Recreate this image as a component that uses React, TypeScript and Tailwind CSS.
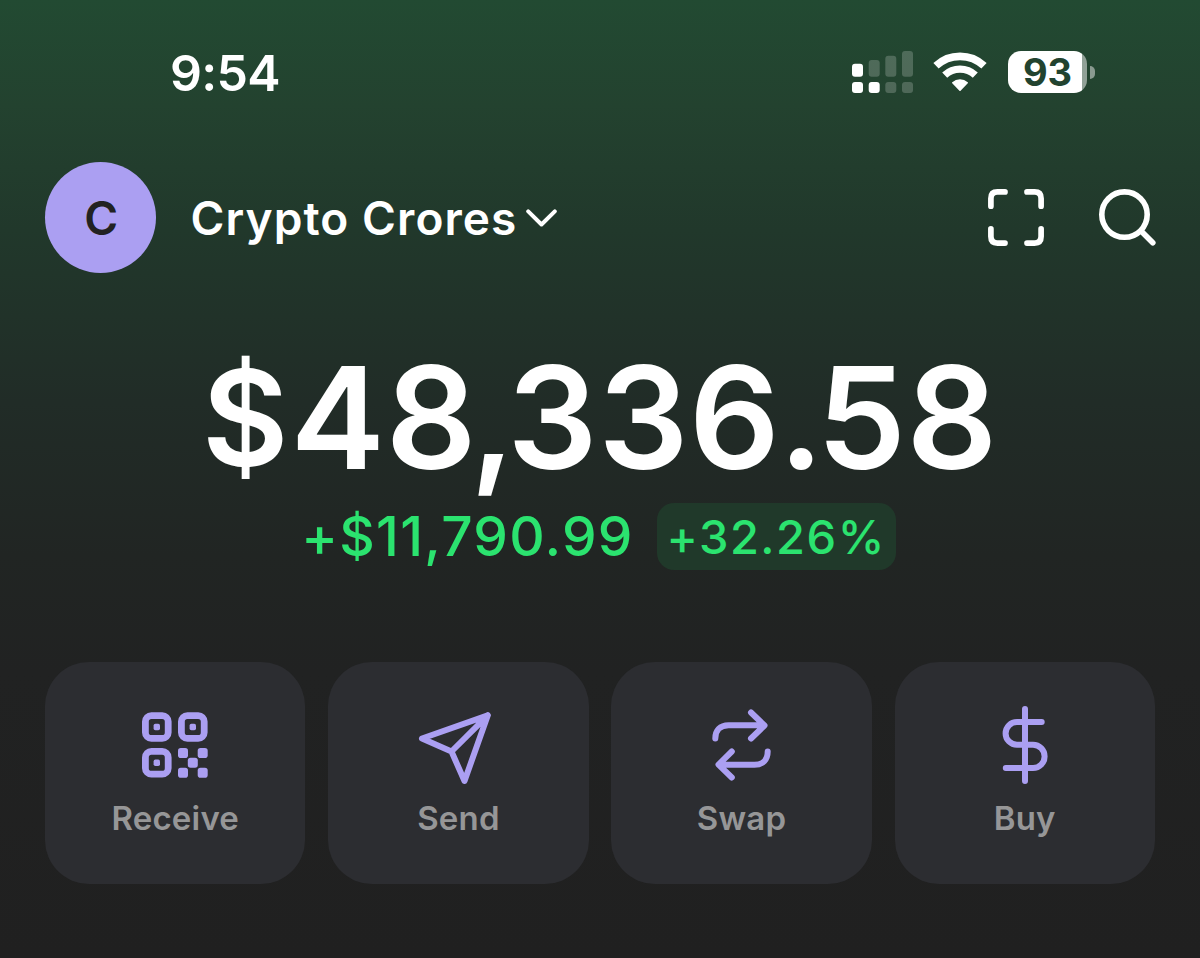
import type { ReactNode } from "react"

function SignalIcon() {
  return (
    <svg width="61" height="42" viewBox="0 0 61 42" fill="white" aria-hidden="true">
      <rect x="0" y="12.7" width="11" height="13" rx="3" />
      <rect x="16.7" y="9" width="11" height="16.7" rx="3" opacity=".2" />
      <rect x="33.3" y="4.7" width="11" height="21" rx="3" opacity=".2" />
      <rect x="50" y="0" width="11" height="25.7" rx="3" opacity=".2" />
      <rect x="0" y="31" width="11" height="11" rx="3" />
      <rect x="16.7" y="31" width="11" height="11" rx="3" />
      <rect x="33.3" y="31" width="11" height="11" rx="3" opacity=".2" />
      <rect x="50" y="31" width="11" height="11" rx="3" opacity=".2" />
    </svg>
  )
}

function WifiIcon() {
  return (
    <svg width="54" height="42" viewBox="0 0 54 42" fill="none" stroke="white" aria-hidden="true">
      <path d="M3 14.8A35.2 35.2 0 0 1 51 14.8" strokeWidth="7.7" />
      <path d="M11.7 24.1A22.4 22.4 0 0 1 42.3 24.1" strokeWidth="7.3" />
      <path d="M19.8 31.8A11 11 0 0 1 34.2 31.8L27 39.2Z" fill="white" strokeWidth="1.6" strokeLinejoin="round" />
    </svg>
  )
}

function Battery({ level }: { level: number }) {
  return (
    <div className="flex items-center">
      <div className="flex h-[42px] w-[79px] items-center justify-center rounded-[13px] bg-[linear-gradient(90deg,#fff_0_74px,#91a197_74px)]">
        <span className="text-[38px] leading-none font-bold text-[#22432f]">{level}</span>
      </div>
      <div className="ml-[3px] h-[13px] w-[5px] rounded-r-full bg-[#8a9a90]" />
    </div>
  )
}

function ScanIcon() {
  return (
    <svg width="56" height="57" viewBox="0 0 56 57" fill="none" stroke="white" strokeWidth="5.7" strokeLinecap="round" aria-hidden="true">
      <path d="M2.9 17.2V9.4Q2.9 2.9 9.4 2.9H17M39 2.9H46.6Q53.1 2.9 53.1 9.4V17.2M53.1 39.8V47.6Q53.1 54.1 46.6 54.1H39M17 54.1H9.4Q2.9 54.1 2.9 47.6V39.8" />
    </svg>
  )
}

function SearchIcon() {
  return (
    <svg width="57" height="57" viewBox="0 0 57 57" fill="none" stroke="white" strokeWidth="5.6" strokeLinecap="round" aria-hidden="true">
      <circle cx="25.5" cy="25.6" r="22.7" />
      <path d="M42.3 42.2L53.8 53.8" />
    </svg>
  )
}

const strokeProps = {
  fill: "none",
  stroke: "#ab9ff2",
  strokeWidth: 6,
  strokeLinecap: "round",
  strokeLinejoin: "round",
} as const

function Finder({ x, y }: { x: number; y: number }) {
  return (
    <g>
      <rect x={x + 3.4} y={y + 3.4} width="22.8" height="22.8" rx="6" {...strokeProps} strokeWidth={6.8} />
      <rect x={x + 11.6} y={y + 11.6} width="6.4" height="6.4" rx="1.8" fill="#ab9ff2" />
    </g>
  )
}

const qrDots = [
  [58, 53],
  [77.7, 53],
  [67.8, 62.8],
  [58, 72.7],
  [77.7, 72.7],
]

const actions: { label: string; viewBox: string; icon: ReactNode }[] = [
  {
    label: "Receive",
    viewBox: "7 5 96 92",
    icon: (
      <>
        <Finder x={22} y={17.2} />
        <Finder x={58} y={17.2} />
        <Finder x={22} y={53} />
        {qrDots.map(([x, y]) => (
          <rect key={`${x}-${y}`} x={x} y={y} width="10" height="10" rx="2.8" fill="#ab9ff2" />
        ))}
      </>
    ),
  },
  {
    label: "Send",
    viewBox: "10.5 5 96 92",
    icon: <path d="M22.5 43.5L88.3 20.3L65 86L52 56.5ZM52 56.5L88.3 20.3" {...strokeProps} />,
  },
  {
    label: "Swap",
    viewBox: "4 5 96 92",
    icon: (
      <path
        d="M25.3 43.5C25.3 35.5 30 30.3 38.5 30.3H74M61 17.5L74.5 30.5L61 43.5M77.7 56.5C77.7 64.5 73 69.7 64.5 69.7H29M41.8 56.5L28.5 69.6L41.8 82.5"
        {...strokeProps}
      />
    ),
  },
  {
    label: "Buy",
    viewBox: "-3 5 96 92",
    icon: <path d="M45 14V86M61.7 27H37A11.4 11.4 0 0 0 37 49.8H53A11.6 11.6 0 0 1 53 73H25.8" {...strokeProps} />,
  },
]

export default function App() {
  return (
    <div className="h-[958px] w-[1200px] overflow-hidden bg-[linear-gradient(180deg,#224a32_0%,#23422f_11%,#21382b_24%,#212c27_42%,#212523_58%,#212222_70%,#202020_100%)] font-['Inter',sans-serif] text-white">
      {/* Status bar */}
      <div className="flex h-[144px] items-center justify-between pr-[105px] pl-[170px]">
        <span className="pt-[2px] text-[50px] leading-none font-semibold tracking-[-0.7px]">9:54</span>
        <div className="flex items-center">
          <SignalIcon />
          <div className="mr-[21px] ml-5">
            <WifiIcon />
          </div>
          <Battery level={93} />
        </div>
      </div>

      {/* Account header */}
      <header className="mt-[17.5px] flex h-28 items-center justify-between pr-11 pl-[44.5px]">
        <div className="flex items-center">
          <div className="flex size-[111.5px] items-center justify-center rounded-full bg-[#ab9ff2] pl-0.5 text-[46px] leading-none font-semibold text-[#222222]">
            C
          </div>
          <button className="ml-[34.5px] flex items-center">
            <span className="text-[46px] leading-none font-semibold tracking-[1.08px] whitespace-nowrap">Crypto Crores</span>
            <svg className="ml-[9px]" width="31" height="18" viewBox="0 0 31 18" fill="none" stroke="white" strokeWidth="4" strokeLinecap="round" strokeLinejoin="round" aria-hidden="true">
              <path d="M2.2 2.3L15.5 15.5L28.8 2.3" />
            </svg>
          </button>
        </div>
        <div className="flex items-center gap-[55px]">
          <button aria-label="Scan">
            <ScanIcon />
          </button>
          <button aria-label="Search">
            <SearchIcon />
          </button>
        </div>
      </header>

      {/* Balance, with tighter spacing around the currency sign and separators */}
      <section className="mt-[67px] flex flex-col items-center">
        <div className="flex h-[152px] items-baseline text-[142px] leading-[152px] font-semibold tracking-[0.5px] whitespace-nowrap">
          <span className="-translate-y-[3px] text-[133px] tracking-[2px]">$</span>4<span className="tracking-[-6.5px]">8</span>
          <span className="tracking-[-8px]">,</span>33<span className="tracking-[-1.5px]">6</span>
          <span className="tracking-[-7px]">.</span>58
        </div>
        <div className="mt-[9.5px] flex h-[68px] items-center gap-[23px] pr-[3px] text-[#2be36f]">
          <span className="text-[55px] leading-none font-medium tracking-[1.25px] whitespace-nowrap">+$11,790.99</span>
          <span className="flex h-[67px] w-[239px] items-center justify-center rounded-[17px] bg-[#20392a] text-[47px] leading-none font-medium tracking-[1.5px] whitespace-nowrap">
            +32.26%
          </span>
        </div>
      </section>

      {/* Quick actions */}
      <nav className="mt-[91.5px] grid grid-cols-4 gap-[22.7px] px-[45px]">
        {actions.map((action) => (
          <button key={action.label} className="flex h-[222.5px] flex-col items-center rounded-[44px] bg-[#2c2d31] pt-[38.5px]">
            <svg width="96" height="92" viewBox={action.viewBox} aria-hidden="true">
              {action.icon}
            </svg>
            <span className="mt-[8.5px] text-[33px] leading-[34px] font-semibold tracking-[0.2px] text-[#969697]">{action.label}</span>
          </button>
        ))}
      </nav>
    </div>
  )
}
